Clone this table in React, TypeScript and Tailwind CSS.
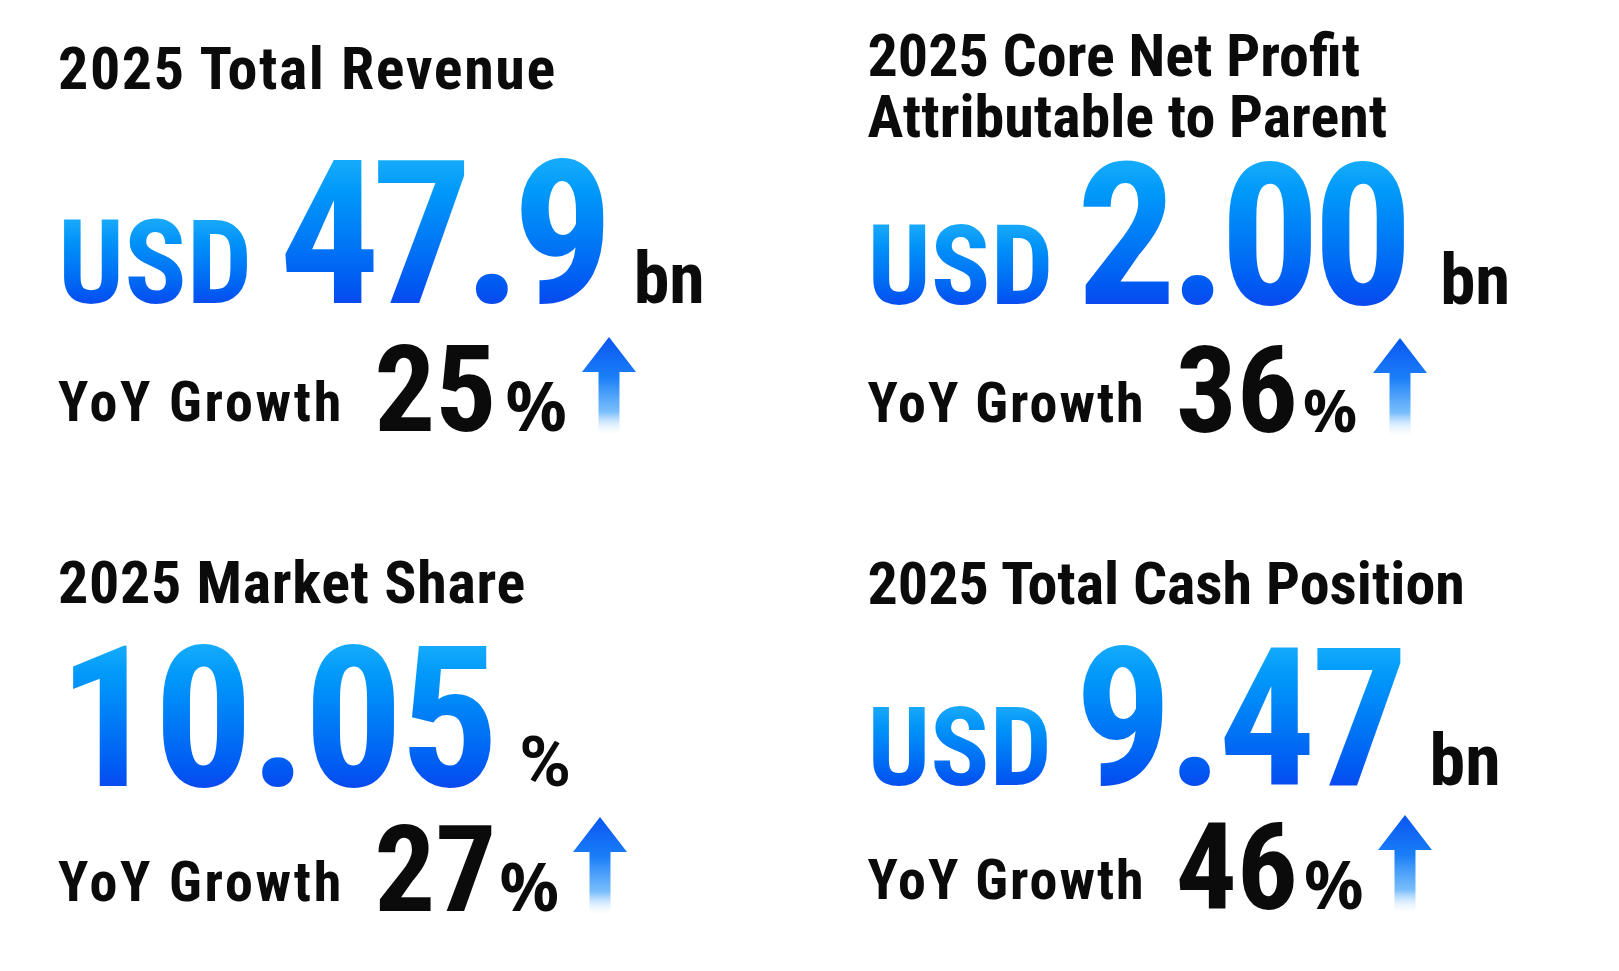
import React from "react";

type Card = {
  title: string[];
  titleTrack: string;
  prefix?: string;
  prefixCls: string;
  value: string;
  valueCls: string;
  unit: string;
  unitCls: string;
  labelTrack: string;
  growth: string;
  pctCls: string;
  arrowMl: string;
  pt: string;
  bigMt: string;
  growMt: string;
};

const cards: Card[] = [
  {
    title: ["2025 Total Revenue"],
    titleTrack: "tracking-[1.6px]",
    prefix: "USD",
    prefixCls: "text-[116px] mr-[27px]",
    value: "47.9",
    valueCls: "text-[200px] tracking-[-9px]",
    unit: "bn",
    unitCls: "text-[72px] ml-[29px]",
    labelTrack: "tracking-[2.8px]",
    growth: "25",
    pctCls: "text-[68px] ml-[9px]",
    arrowMl: "ml-[15px]",
    pt: "pt-[38px]",
    bigMt: "mt-[56px]",
    growMt: "mt-[9px]",
  },
  {
    title: ["2025 Core Net Profit", "Attributable to Parent"],
    titleTrack: "tracking-[0px]",
    prefix: "USD",
    prefixCls: "text-[111px] mr-[23px]",
    value: "2.00",
    valueCls: "text-[198px] tracking-[-7px]",
    unit: "bn",
    unitCls: "text-[71px] ml-[34px]",
    labelTrack: "tracking-[2px]",
    growth: "36",
    pctCls: "text-[60px] ml-[5px]",
    arrowMl: "ml-[16px]",
    pt: "pt-[25px]",
    bigMt: "mt-[9px]",
    growMt: "mt-[9px]",
  },
  {
    title: ["2025 Market Share"],
    titleTrack: "tracking-[0.7px]",
    prefixCls: "",
    value: "10.05",
    valueCls: "text-[196px] tracking-[-3px]",
    unit: "%",
    unitCls: "text-[70px] ml-[23px] font-['Roboto',sans-serif]",
    labelTrack: "tracking-[2.8px]",
    growth: "27",
    pctCls: "text-[66px] ml-[3px]",
    arrowMl: "ml-[14px]",
    pt: "pt-[67px]",
    bigMt: "mt-[26px]",
    growMt: "mt-[11px]",
  },
  {
    title: ["2025 Total Cash Position"],
    titleTrack: "tracking-[0px]",
    prefix: "USD",
    prefixCls: "text-[110px] mr-[23px]",
    value: "9.47",
    valueCls: "text-[193px] tracking-[-5px]",
    unit: "bn",
    unitCls: "text-[72px] ml-[26px]",
    labelTrack: "tracking-[2px]",
    growth: "46",
    pctCls: "text-[66px] ml-[6px]",
    arrowMl: "ml-[14px]",
    pt: "pt-[68px]",
    bigMt: "mt-[25px]",
    growMt: "mt-[5px]",
  },
];

function Arrow({ ml, id }: { ml: string; id: string }) {
  return (
    <svg width="54" height="100" viewBox="0 0 54 100" className={`mb-[14px] shrink-0 ${ml}`}>
      <defs>
        <linearGradient id={id} x1="0" y1="0" x2="0" y2="1">
          <stop offset="0" stopColor="#0a56f2" />
          <stop offset="0.4" stopColor="#1a7ef7" />
          <stop offset="0.75" stopColor="#62b3fb" stopOpacity="0.85" />
          <stop offset="1" stopColor="#ffffff" stopOpacity="0" />
        </linearGradient>
      </defs>
      <path d="M27 0 L54 35 L37.5 35 L37.5 100 L16.5 100 L16.5 35 L0 35 Z" fill={`url(#${id})`} />
    </svg>
  );
}

function StatCard({ c, idx }: { c: Card; idx: number }) {
  return (
    <div className={`pl-[58px] ${c.pt} flex flex-col`}>
      <h2 className={`text-[60px] leading-[61px] font-bold text-[#0b0b0b] ${c.titleTrack}`}>
        {c.title.map((t) => (
          <div key={t}>{t}</div>
        ))}
      </h2>
      <div className={`flex items-baseline ${c.bigMt}`}>
        {c.prefix && (
          <span
            className={`${c.prefixCls} leading-none font-bold bg-linear-to-b from-[#16a6fa] from-[15%] to-[#0a4cf0] to-[85%] bg-clip-text text-transparent`}
          >
            {c.prefix}
          </span>
        )}
        <span
          className={`${c.valueCls} leading-[160px] font-bold bg-linear-to-b from-[#14aafb] from-[5%] to-[#0a4af0] to-[92%] bg-clip-text text-transparent`}
        >
          {c.value}
        </span>
        <span className={`${c.unitCls} leading-none font-bold text-[#0b0b0b]`}>{c.unit}</span>
      </div>
      <div className={`flex items-end ${c.growMt}`}>
        <span className={`text-[56px] leading-none font-bold text-[#0b0b0b] mb-[21px] ${c.labelTrack}`}>
          YoY Growth
        </span>
        <span className="flex items-baseline ml-[30px]">
          <span className="text-[121px] leading-none font-bold text-[#0b0b0b]">{c.growth}</span>
          <span className={`leading-none font-bold text-[#0b0b0b] font-['Noto_Sans',sans-serif] ${c.pctCls}`}>%</span>
        </span>
        <Arrow ml={c.arrowMl} id={`arrowGrad${idx}`} />
      </div>
    </div>
  );
}

export default function App() {
  return (
    <div className="w-[1619px] h-[971px] bg-white overflow-hidden font-['Roboto_Condensed','Liberation_Sans_Narrow','DejaVu_Sans_Condensed',Roboto,sans-serif]">
      <div className="grid grid-cols-2 grid-rows-[485px_486px] h-full">
        {cards.map((c, i) => (
          <StatCard key={c.title[0]} c={c} idx={i} />
        ))}
      </div>
    </div>
  );
}
